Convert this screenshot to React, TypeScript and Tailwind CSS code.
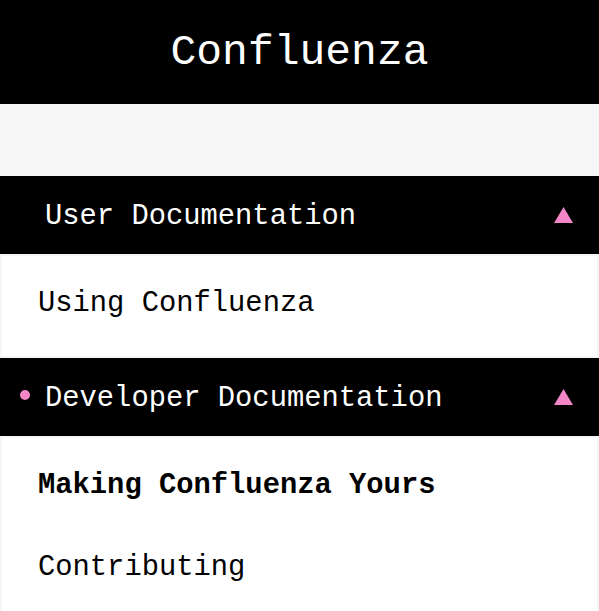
import { useState } from 'react';

type Section = {
  title: string;
  items: { label: string; active?: boolean }[];
  current?: boolean;
};

const sections: Section[] = [
  { title: 'User Documentation', items: [{ label: 'Using Confluenza' }] },
  {
    title: 'Developer Documentation',
    current: true,
    items: [{ label: 'Making Confluenza Yours', active: true }, { label: 'Contributing' }],
  },
];

const SectionBlock = ({ section }: { section: Section }) => {
  const [open, setOpen] = useState(true);
  return (
    <div>
      <button
        type="button"
        onClick={() => setOpen(o => !o)}
        className="relative w-full h-[78px] bg-black text-white flex items-center justify-between pl-[45px] pr-[26px] text-[28.8px]"
      >
        {section.current && (
          <span className="absolute left-[20px] top-[37px] -translate-y-1/2 w-[10px] h-[10px] rounded-full bg-[#f286c7]" />
        )}
        <span className="pt-[3px]">{section.title}</span>
        <svg width="19" height="16" viewBox="0 0 19 16" className={open ? '' : 'rotate-180'}>
          <polygon points="9.5,0 19,16 0,16" fill="#f286c7" />
        </svg>
      </button>
      {open && (
        <div className="p-[2px]">
          <ul className="bg-white pt-[7px] pb-[11px]">
            {section.items.map(item => (
              <li
                key={item.label}
                className={`h-[82px] flex items-center pl-[36px] text-[28.8px] text-black ${item.active ? 'font-bold' : ''}`}
              >
                {item.label}
              </li>
            ))}
          </ul>
        </div>
      )}
    </div>
  );
};

const App = () => {
  return (
    <div className="w-[599px] h-[611px] overflow-hidden bg-[#f6f6f6] font-['Liberation_Mono',monospace]">
      <header className="h-[104px] bg-black text-white flex items-center justify-center pt-[3px] text-[43px]">
        Confluenza
      </header>
      <div className="h-[72px]" />
      {sections.map(s => (
        <SectionBlock key={s.title} section={s} />
      ))}
    </div>
  );
};

export default App;
